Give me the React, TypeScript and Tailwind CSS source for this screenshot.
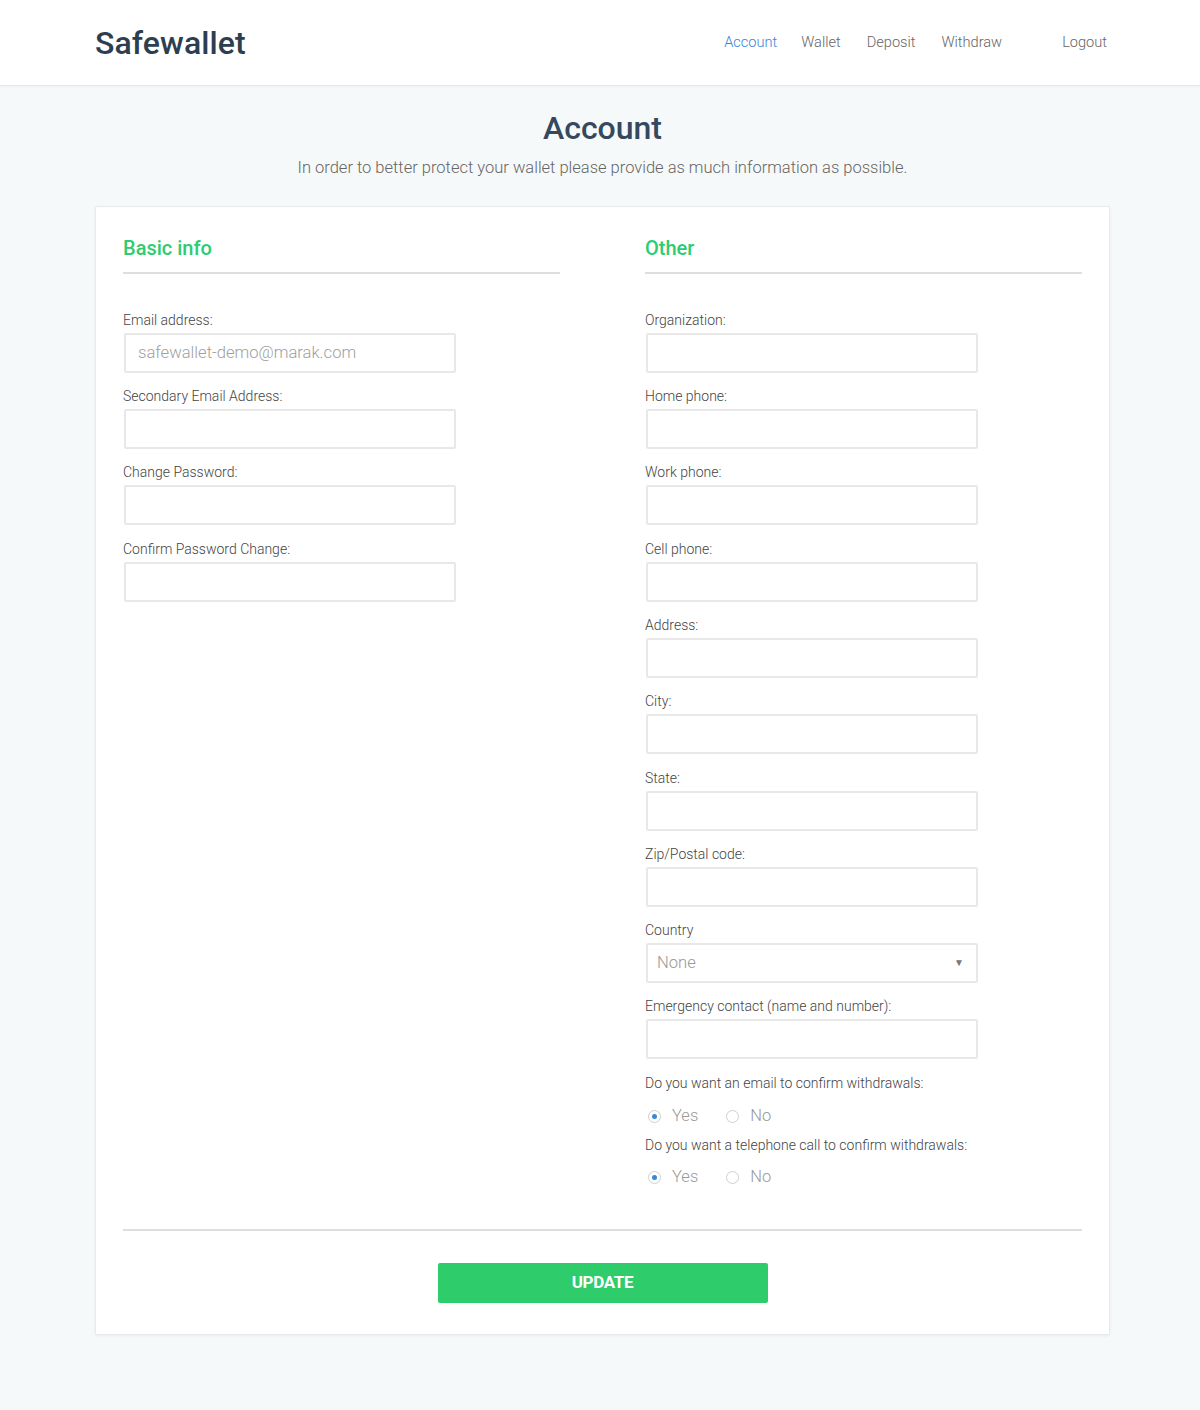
import { useState } from 'react';

const navItems = [
  { label: 'Account', gap: 'ml-0', active: true },
  { label: 'Wallet', gap: 'ml-[24px]' },
  { label: 'Deposit', gap: 'ml-[26px]' },
  { label: 'Withdraw', gap: 'ml-[26px]' },
  { label: 'Logout', gap: 'ml-[60px]' },
];

const basicFields = [
  { label: 'Email address:', placeholder: 'safewallet-demo@marak.com' },
  { label: 'Secondary Email Address:' },
  { label: 'Change Password:', type: 'password' },
  { label: 'Confirm Password Change:', type: 'password' },
];

const otherFields = [
  'Organization:',
  'Home phone:',
  'Work phone:',
  'Cell phone:',
  'Address:',
  'City:',
  'State:',
  'Zip/Postal code:',
];

function Field({ label, placeholder, type = 'text' }: { label: string; placeholder?: string; type?: string }) {
  return (
    <div className="mb-[13.3px]">
      <label className="block h-5 text-[14px] leading-5 font-light text-[#444]">{label}</label>
      <input
        type={type}
        placeholder={placeholder}
        className="mt-[3px] ml-px block h-[40px] w-[332px] rounded-[2px] border-2 border-[#e8e8e8] bg-white px-[12px] text-[16.6px] font-light text-[#555] outline-none placeholder:text-[#a0a0a0]"
      />
    </div>
  );
}

function SectionTitle({ children }: { children: string }) {
  return (
    <div className="mb-[36px] border-b-2 border-[#dedede] pb-[10px]">
      <h2 className="text-[20px] leading-[28px] font-medium text-[#2ecc71]">{children}</h2>
    </div>
  );
}

function RadioPair({ name }: { name: string }) {
  const [value, setValue] = useState('yes');
  return (
    <div className="flex h-[30px] items-center gap-[28px] pl-[3px] text-[16.5px] font-light text-[#999]">
      {['yes', 'no'].map((v) => (
        <label key={v} className="flex cursor-pointer items-center gap-[6px]" onClick={() => setValue(v)}>
          <span className="flex h-[13px] w-[13px] items-center justify-center rounded-full border border-[#cfcfcf] bg-white">
            {value === v && <span className="h-[5px] w-[5px] rounded-full bg-[#3a86d8]" />}
          </span>
          <input type="radio" name={name} className="hidden" readOnly checked={value === v} />
          <span className="ml-[5px]">{v === 'yes' ? 'Yes' : 'No'}</span>
        </label>
      ))}
    </div>
  );
}

export default function App() {
  return (
    <div className="min-h-[1410px] bg-[#f6f9f9] font-['Roboto',sans-serif]">
      <header className="h-[86px] border-b border-[#e6e9e9] bg-white shadow-[0_1px_2px_rgba(0,0,0,0.04)]">
        <div className="pl-[5px]">
          <div className="mx-auto flex h-[85px] w-[1015px] items-center justify-between">
            <div className="text-[32px] leading-none font-medium tracking-[0.1px] text-[#2c3e50]">Safewallet</div>
            <nav className="flex items-center pr-[3px] text-[14.6px] font-light text-[#666]">
              {navItems.map((item) => (
                <a key={item.label} href="#" className={`${item.gap} ${item.active ? 'text-[#3a86d8]' : ''}`}>
                  {item.label}
                </a>
              ))}
            </nav>
          </div>
        </div>
      </header>

      <main className="pl-[5px]">
        <div className="mx-auto w-[1015px]">
          <div className="pt-[23px] pb-[25px] text-center">
            <h1 className="text-[32px] leading-[38px] font-medium text-[#34495e]">Account</h1>
            <p className="mt-[9px] text-[16.5px] font-light text-[#666]">
              In order to better protect your wallet please provide as much information as possible.
            </p>
          </div>

          <div className="rounded-[2px] border border-[#e8ebeb] bg-white px-[27px] pt-[27px] pb-[31px] shadow-[0_1px_3px_rgba(0,0,0,0.06)]">
            <div className="grid grid-cols-2 gap-[85px]">
              <section>
                <SectionTitle>Basic info</SectionTitle>
                {basicFields.map((f) => (
                  <Field key={f.label} {...f} />
                ))}
              </section>

              <section>
                <SectionTitle>Other</SectionTitle>
                {otherFields.map((label) => (
                  <Field key={label} label={label} />
                ))}
                <div className="mb-[13.3px]">
                  <label className="block h-5 text-[14px] leading-5 font-light text-[#444]">Country</label>
                  <div className="relative mt-[3px] ml-px w-[332px]">
                    <select className="block h-[40px] w-full appearance-none rounded-[2px] border-2 border-[#e8e8e8] bg-white px-[9px] text-[16.6px] font-light text-[#999] outline-none">
                      <option>None</option>
                    </select>
                    <span className="pointer-events-none absolute top-[12px] right-[14px] text-[10px] text-[#777]">▼</span>
                  </div>
                </div>
                <Field label="Emergency contact (name and number):" />
                <label className="block h-5 text-[14px] leading-5 font-light text-[#444]">
                  Do you want an email to confirm withdrawals:
                </label>
                <div className="mt-[9px] mb-[3px]">
                  <RadioPair name="email" />
                </div>
                <label className="block h-5 text-[14px] leading-5 font-light text-[#444]">
                  Do you want a telephone call to confirm withdrawals:
                </label>
                <div className="mt-[8px]">
                  <RadioPair name="phone" />
                </div>
              </section>
            </div>

            <div className="mt-[36px] border-t-2 border-[#dedede]" />

            <div className="flex justify-center pt-[32px]">
              <button className="h-[40px] w-[330px] rounded-[2px] bg-[#2ecc6a] text-[17px] font-bold tracking-[-0.3px] text-white">
                UPDATE
              </button>
            </div>
          </div>
        </div>
      </main>
    </div>
  );
}
